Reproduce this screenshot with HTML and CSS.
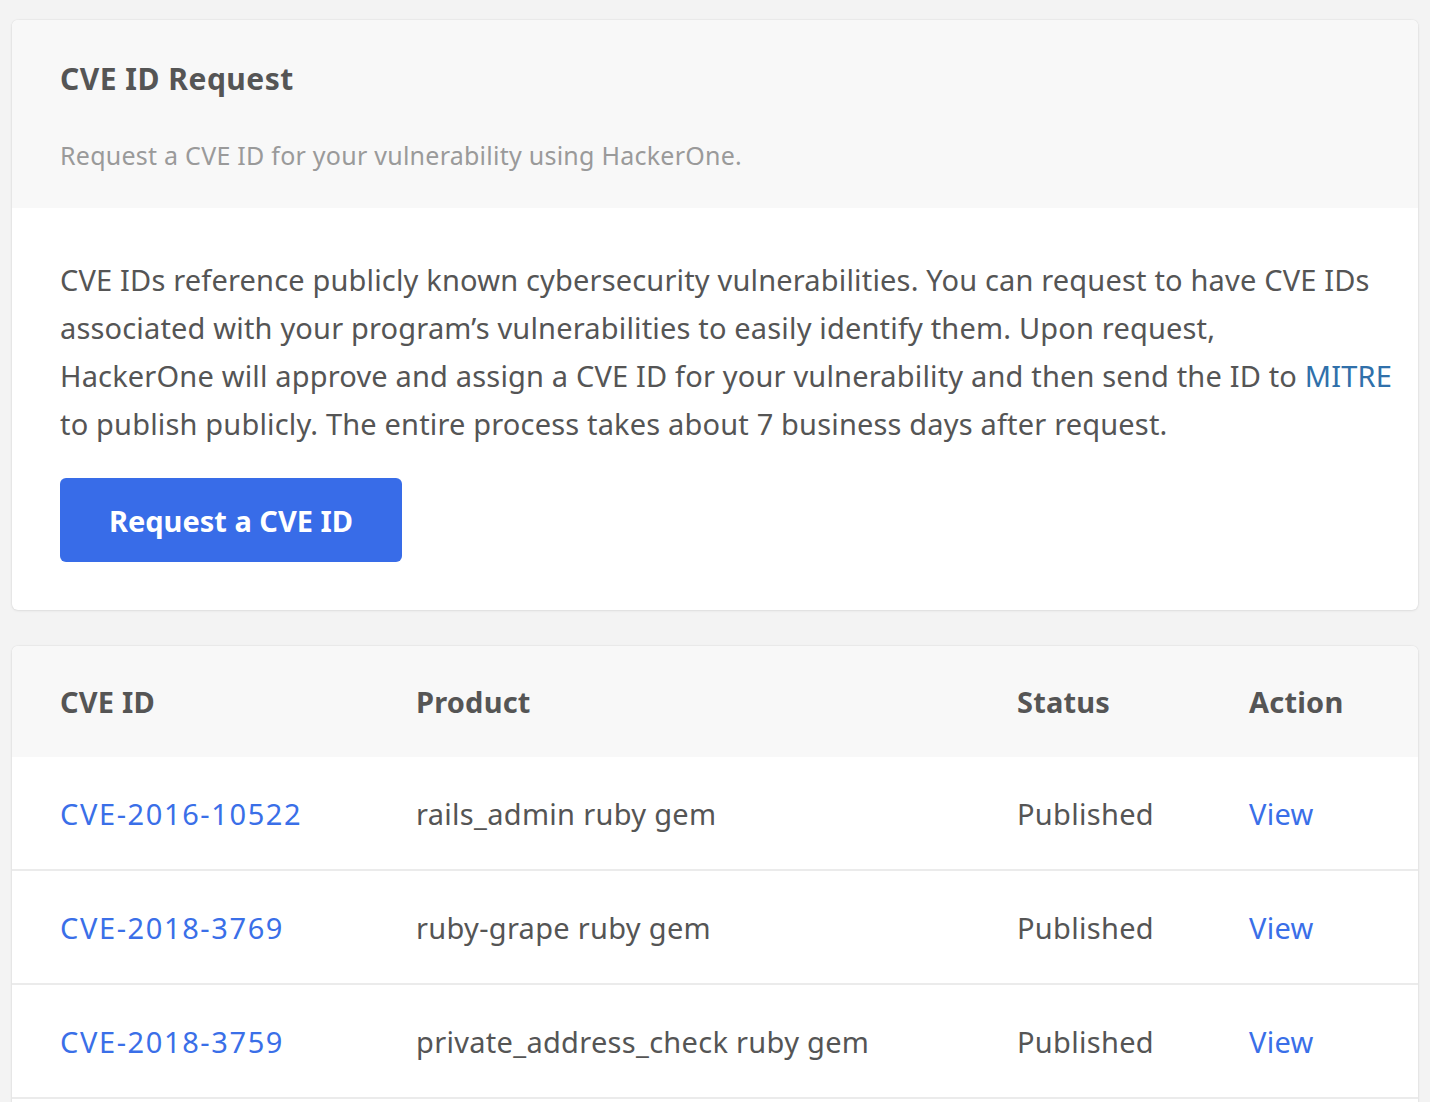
FILE: index.html
```html
<!DOCTYPE html>
<html lang="en">
<head>
<meta charset="utf-8">
<title>CVE ID Request</title>
<link rel="stylesheet" href="styles.css">
</head>
<body>
<div class="page">
  <section class="card">
    <header class="card-header">
      <h1 class="card-title">CVE ID Request</h1>
      <p class="card-subtitle">Request a CVE ID for your vulnerability using HackerOne.</p>
    </header>
    <div class="card-body">
      <p class="intro">CVE IDs reference publicly known cybersecurity vulnerabilities. You can request to have CVE IDs associated with your program’s vulnerabilities to easily identify them. Upon request,<br>HackerOne will approve and assign a CVE ID for your vulnerability and then send the ID to <a class="mitre" href="#">MITRE</a> to publish publicly. The entire process takes about 7 business days after request.</p>
      <button class="btn-primary" type="button">Request a CVE ID</button>
    </div>
  </section>

  <section class="card table-card">
    <div class="row head">
      <div>CVE ID</div>
      <div>Product</div>
      <div>Status</div>
      <div>Action</div>
    </div>
    <div class="row">
      <div><a class="link cve" href="#">CVE-2016-10522</a></div>
      <div>rails_admin ruby gem</div>
      <div>Published</div>
      <div><a class="link" href="#">View</a></div>
    </div>
    <div class="row">
      <div><a class="link cve" href="#">CVE-2018-3769</a></div>
      <div>ruby-grape ruby gem</div>
      <div>Published</div>
      <div><a class="link" href="#">View</a></div>
    </div>
    <div class="row">
      <div><a class="link cve" href="#">CVE-2018-3759</a></div>
      <div>private_address_check ruby gem</div>
      <div>Published</div>
      <div><a class="link" href="#">View</a></div>
    </div>
  </section>
</div>
</body>
</html>
```

FILE: styles.css
```css
* { box-sizing: border-box; }

html, body {
  margin: 0;
  padding: 0;
  background: #f3f3f3;
  font-family: "Noto Sans", "Lato", sans-serif;
  color: #555555;
}

.page {
  padding: 20px 12px 0 12px;
}

.card {
  background: #ffffff;
  border-radius: 6px;
  box-shadow: 0 0 2px rgba(0, 0, 0, 0.12), 0 1px 3px rgba(0, 0, 0, 0.06);
  overflow: hidden;
  margin-bottom: 36px;
}

.card-header {
  background: #f8f8f8;
  padding: 41px 48px 37px 48px;
}

.card-title {
  margin: 0;
  font-size: 30px;
  line-height: 36px;
  font-weight: 700;
  letter-spacing: 0.5px;
  color: #555555;
}

.card-subtitle {
  margin: 42px 0 0 0;
  font-size: 25px;
  line-height: 32px;
  letter-spacing: 0.25px;
  color: #9a9a9a;
}

.card-body {
  padding: 48px 48px 48px 48px;
}

.intro {
  margin: 0 -26px 0 0;
  font-size: 29px;
  line-height: 48px;
  letter-spacing: 0.17px;
  color: #555555;
}

.mitre {
  color: #3070aa;
  text-decoration: none;
}

.btn-primary {
  margin-top: 30px;
  height: 84px;
  width: 342px;
  border: 0;
  border-radius: 6px;
  background: #386ce8;
  color: #ffffff;
  font-family: "Noto Sans", "Lato", sans-serif;
  font-size: 29px;
  font-weight: 700;
  cursor: pointer;
}

.table-card {
  margin-bottom: 0;
  padding-bottom: 20px;
  border-bottom-left-radius: 0;
  border-bottom-right-radius: 0;
}

.row {
  display: grid;
  grid-template-columns: 356px 601px 232px 1fr;
  align-items: center;
  padding-left: 48px;
  height: 114px;
  border-bottom: 2px solid #ebebeb;
  font-size: 29px;
  letter-spacing: 0.3px;
  color: #555555;
}

.row.head {
  height: 111px;
  border-bottom: 0;
  background: #f8f8f8;
  font-weight: 700;
  letter-spacing: 0.2px;
}

.link {
  color: #3a6fe8;
  text-decoration: none;
}

.link.cve {
  letter-spacing: 1.6px;
}
```
